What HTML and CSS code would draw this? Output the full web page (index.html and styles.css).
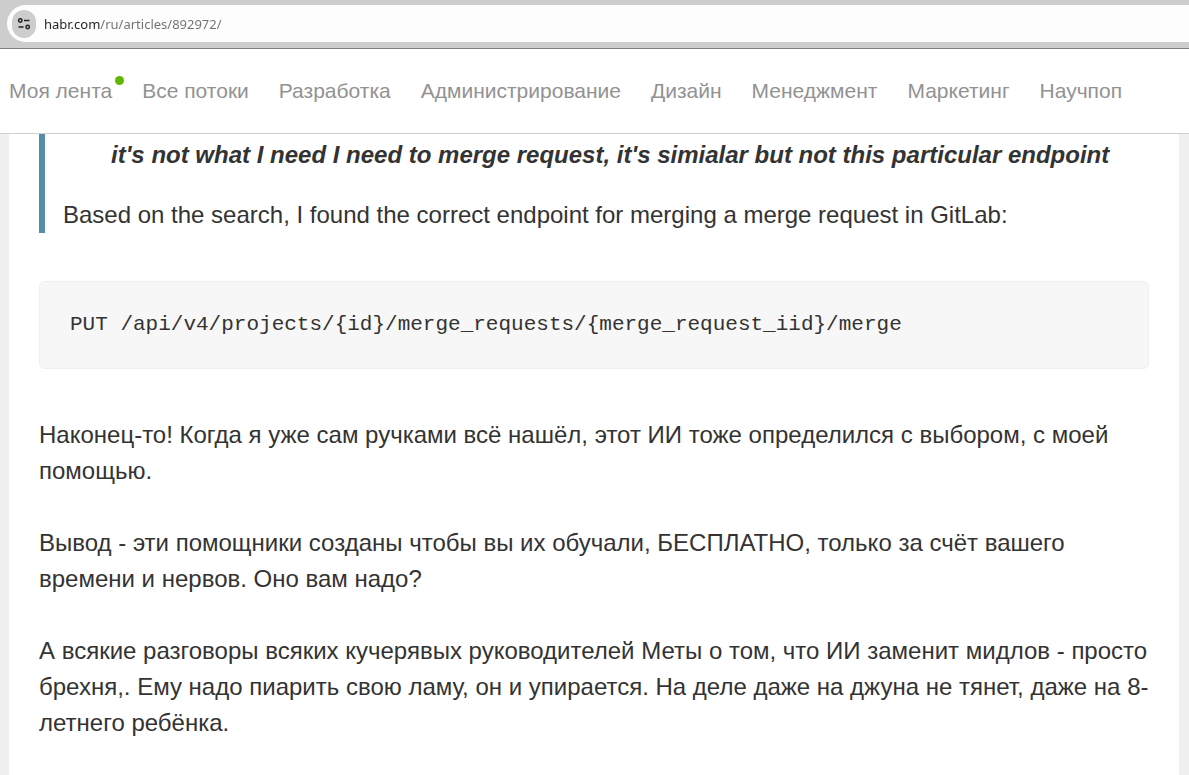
FILE: index.html
```
<!DOCTYPE html>
<html lang="ru">

<head>
    <meta charset="UTF-8">
    <meta name="viewport" content="width=device-width, initial-scale=1.0">
    <title>Хабр</title>
    <link rel="stylesheet" href="styles.css">
</head>

<body>
    <div class="browser-bar">
        <div class="address">
            <button type="button" class="site-info" aria-label="Сведения о сайте">
                <svg width="14" height="14" viewBox="0 0 14 14" fill="none" stroke="#222" stroke-width="1.5">
                    <circle cx="3.3" cy="3.5" r="1.7" />
                    <path d="M7 3.5h5.5M1.5 10h5" />
                    <circle cx="10.7" cy="10" r="1.7" />
                </svg>
            </button>
            <input type="text" class="url" aria-label="Адрес" value="habr.com/ru/articles/892972/">
        </div>
    </div>

    <header class="header">
        <nav class="nav">
            <a href="#" class="nav-new">Моя лента</a>
            <a href="#">Все потоки</a>
            <a href="#">Разработка</a>
            <a href="#">Администрирование</a>
            <a href="#">Дизайн</a>
            <a href="#">Менеджмент</a>
            <a href="#">Маркетинг</a>
            <a href="#">Научпоп</a>
        </nav>
    </header>

    <main class="article">
        <blockquote class="quote">
            <p class="question">it's not what I need I need to merge request, it's simialar but not this particular endpoint</p>
            <p>Based on the search, I found the correct endpoint for merging a merge request in GitLab:</p>
        </blockquote>

        <pre class="code"><code>PUT /api/v4/projects/{id}/merge_requests/{merge_request_iid}/merge</code></pre>

        <p>Наконец-то! Когда я уже сам ручками всё нашёл, этот ИИ тоже определился с выбором, с моей помощью.</p>
        <p>Вывод - эти помощники созданы чтобы вы их обучали, БЕСПЛАТНО, только за счёт вашего времени и нервов. Оно вам надо?</p>
        <p>А всякие разговоры всяких кучерявых руководителей Меты о том, что ИИ заменит мидлов - просто брехня,. Ему надо пиарить свою ламу, он и упирается. На деле даже на джуна не тянет, даже на 8-летнего ребёнка.</p>
    </main>
</body>

</html>
```
FILE: styles.css
```
* {
    box-sizing: border-box;
}

body {
    display: flex;
    flex-direction: column;
    min-height: 100vh;
    margin: 0;
    background: #f0f0f0;
    color: #333;
    font-family: "Liberation Sans", Arial, sans-serif;
    font-size: 24px;
    line-height: 36px;
}

p {
    margin: 0;
}

/* browser bar */
.browser-bar {
    padding: 5px 0 6px 7px;
    background: #cdcdcd;
    border-bottom: 1px solid #808080;
}

.address {
    display: flex;
    align-items: center;
    gap: 8px;
    height: 37px;
    padding-left: 5px;
    background: #fdfdfd;
    border-radius: 19px 0 0 19px;
}

.site-info {
    display: flex;
    align-items: center;
    justify-content: center;
    width: 24px;
    height: 28px;
    padding: 0;
    background: #cdcdcd;
    border: none;
    border-radius: 12px;
}

/* host is dark, the rest of the address is grey */
.url {
    flex: 1;
    padding: 0;
    border: none;
    outline: none;
    background: linear-gradient(to right, #222 56px, #707070 56px);
    background-clip: text;
    color: transparent;
    caret-color: #222;
    font-family: "Noto Sans", sans-serif;
    font-size: 13px;
    line-height: 20px;
}

/* header */
.header {
    background: #fff;
    border-bottom: 1px solid #d0d0d0;
}

.nav {
    display: flex;
    gap: 30px;
    padding: 24px 9px;
}

.nav a {
    position: relative;
    color: #929292;
    font-size: 21px;
    text-decoration: none;
    white-space: nowrap;
}

.nav-new::after {
    content: "";
    position: absolute;
    top: 3px;
    right: -12px;
    width: 9px;
    height: 9px;
    background: #5fb800;
    border-radius: 50%;
}

/* article */
.article {
    flex: 1;
    margin: 0 10px 0 9px;
    padding: 0 30px;
    background: #fff;
}

.article > p {
    margin-bottom: 36px;
}

.quote {
    margin: 0;
    padding: 3px 0 0 18px;
    border-left: 6px solid #548eaa;
}

.question {
    margin-bottom: 24px;
    padding-left: 48px;
    font-style: italic;
    font-weight: bold;
}

.code {
    margin: 48px 0;
    padding: 27px 30px;
    background: #f7f7f7;
    border: 1px solid #eee;
    border-radius: 6px;
    font-family: "Liberation Mono", monospace;
    font-size: 21px;
    line-height: 32px;
    overflow-x: auto;
}

.code code {
    font-family: inherit;
}
```
